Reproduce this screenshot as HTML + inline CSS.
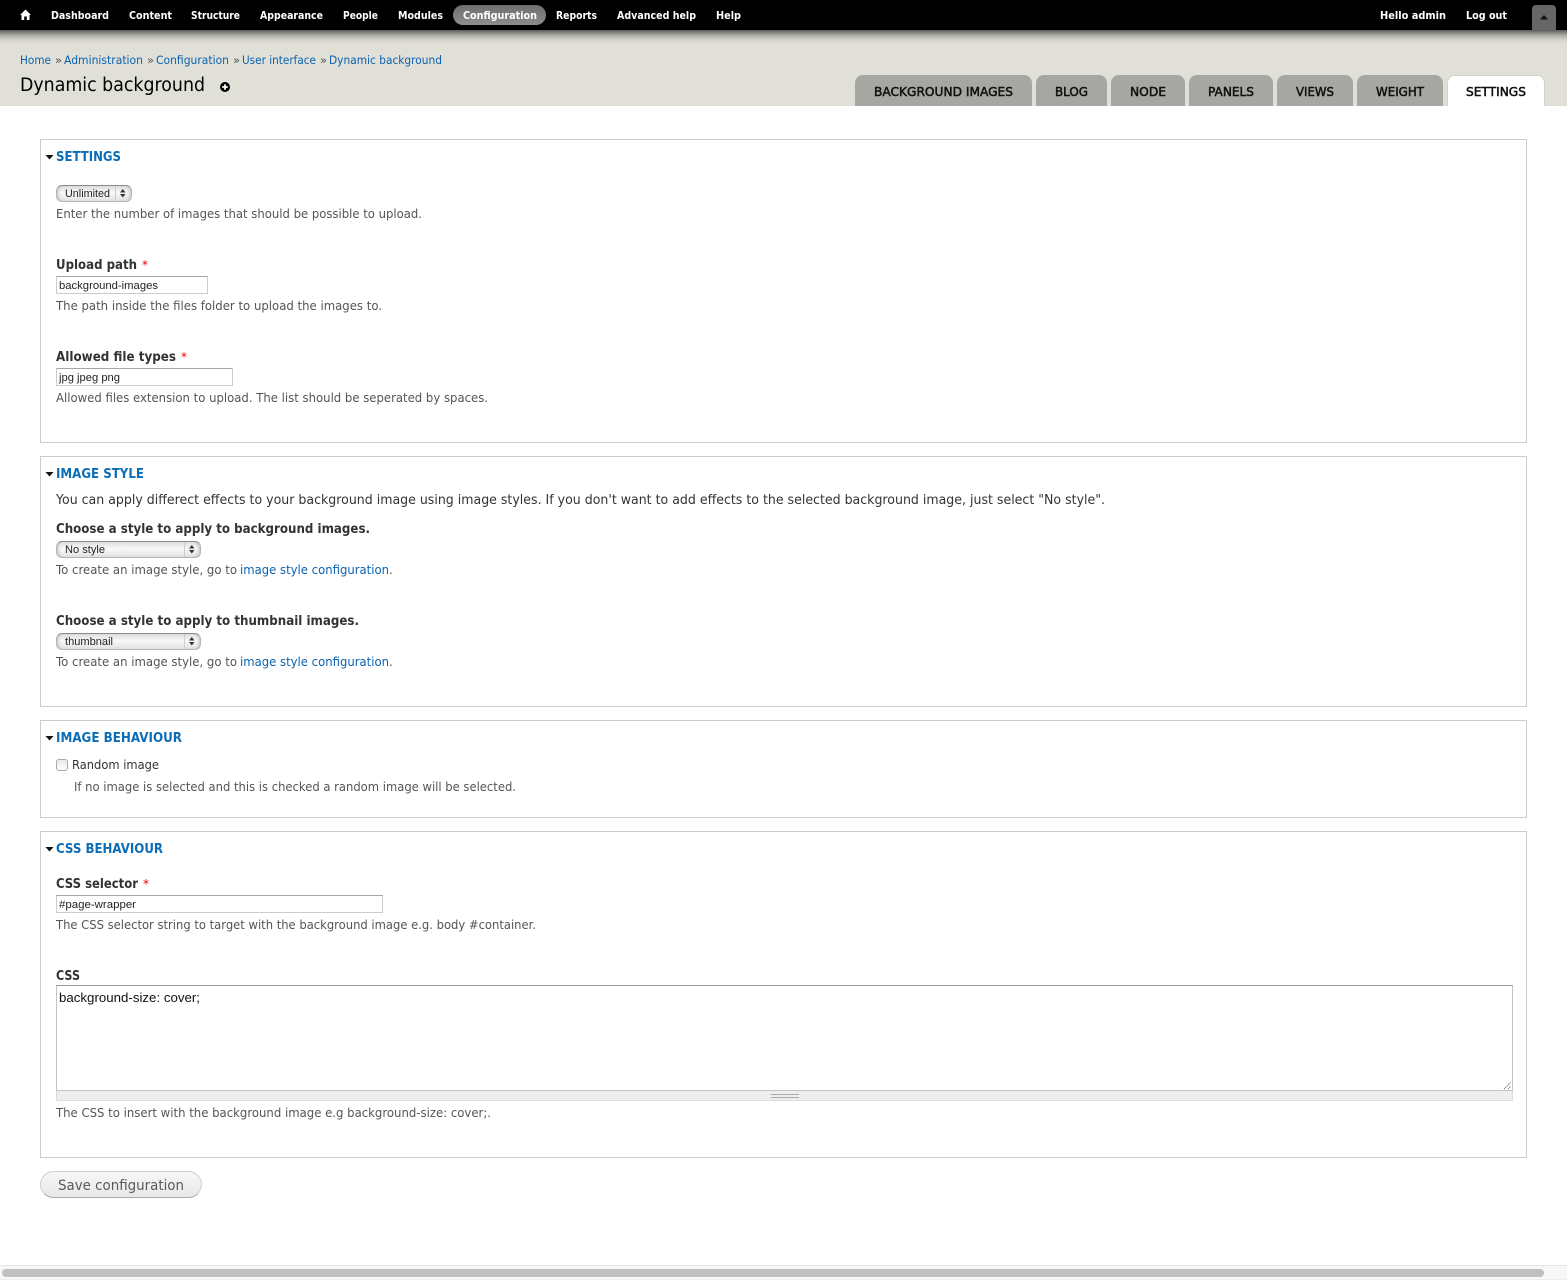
<!DOCTYPE html>
<html lang="en"><head><meta charset="utf-8"><title>Dynamic background</title>
<style>
html,body{margin:0;padding:0;background:#fff;width:1567px;height:1280px;overflow:hidden}
#w{position:relative;width:1567px;height:1280px;overflow:hidden}
#w div{position:absolute;box-sizing:border-box}
.fs{left:40px;width:1487px;border:1px solid #ccc;background:#fff}
.tab{top:75px;height:31px;background:#a6a7a2;border-radius:8px 8px 0 0}
.in{left:56px;height:18px;border:1px solid #ccc;border-top-color:#a5a5a5;background:#fff}
.sel{left:56px;height:17px;border:1px solid #b5b5b5;border-top-color:#8c8c8c;border-radius:6px;background:linear-gradient(#dedede,#f8f8f8 45%,#e2e2e2);box-shadow:inset 3px 0 3px -2px #bbb,inset -3px 0 3px -2px #bbb}
.sep{top:0;bottom:0;width:1px;background:#ccc}
svg{position:absolute;left:0;top:0}
text{font-family:"DejaVu Sans",sans-serif;font-size:12px}
.t{font-family:"DejaVu Sans",sans-serif;font-size:11px;font-weight:bold;fill:#fff}
.h{font-weight:bold;font-size:13px;fill:#0b6db5}
.l{font-weight:bold;font-size:13px;fill:#333}
.d{font-size:12px;fill:#555}
.a{fill:#0b62ae}
.s{font-family:"Liberation Sans",sans-serif;font-size:11px;fill:#222}
.r{font-weight:normal;fill:#e00}
.tb{font-size:12px;fill:#111;stroke:#111;stroke-width:.5px}
.bc{font-size:11.500px;fill:#0b62ae}
.bs{font-size:11.500px;fill:#555}
</style></head><body>
<div id="w">
<div style="left:0;top:30px;width:1567px;height:76px;background:linear-gradient(#5c5c58 0,#a9a9a3 5px,#d4d4cd 10px,#e0e0d8 15px,#e0e0d8 100%)"></div>
<div style="left:0;top:0;width:1567px;height:30px;background:#000"></div>
<div style="left:453px;top:5px;width:93px;height:20px;border-radius:10px;background:linear-gradient(#6e6e6e,#8d8d8d)"></div>
<div style="left:1532px;top:5px;width:24px;height:25px;border-radius:4px 4px 0 0;background:#666"></div>

<div class="tab" style="left:855px;width:177px"></div>
<div class="tab" style="left:1036px;width:71px"></div>
<div class="tab" style="left:1111px;width:74px"></div>
<div class="tab" style="left:1189px;width:84px"></div>
<div class="tab" style="left:1277px;width:76px"></div>
<div class="tab" style="left:1357px;width:86px"></div>
<div class="tab" style="left:1447px;top:75px;width:98px;height:31px;background:#fff;border:1px solid #d2d2cb;border-bottom:0"></div>
<div style="left:0;top:106px;width:1567px;height:1159px;background:#fff"></div>

<div class="fs" style="top:139px;height:304px"></div>
<div class="fs" style="top:456px;height:251px"></div>
<div class="fs" style="top:720px;height:98px"></div>
<div class="fs" style="top:831px;height:327px"></div>

<div class="sel" style="top:185px;width:76px"><div class="sep" style="left:58px"></div></div>
<div class="in" style="top:276px;width:152px"></div>
<div class="in" style="top:368px;width:177px"></div>
<div class="sel" style="top:541px;width:145px"><div class="sep" style="left:127px"></div></div>
<div class="sel" style="top:633px;width:145px"><div class="sep" style="left:127px"></div></div>
<div style="left:56px;top:759px;width:12px;height:12px;border:1px solid #aaa;border-radius:3px;background:linear-gradient(#e8e8e8,#fff)"></div>
<div class="in" style="top:895px;width:327px"></div>
<div style="left:56px;top:985px;width:1457px;height:106px;border:1px solid #c4c4c4;border-top-color:#999;background:#fff"></div>
<div style="left:56px;top:1091px;width:1457px;height:10px;background:#eee;border-bottom:1px solid #ddd;border-right:1px solid #ddd;border-left:1px solid #ddd"></div>
<div style="left:771px;top:1094px;width:28px;height:4px;border-top:1px solid #aaa;border-bottom:1px solid #aaa"></div>
<div style="left:40px;top:1171px;width:162px;height:27px;border:1px solid #d0d0d0;border-bottom-color:#aaa;border-radius:14px;background:linear-gradient(#f7f7f7,#e8e8e8)"></div>
<div style="left:0;top:1265px;width:1567px;height:15px;background:#f7f7f7;border-top:1px solid #e6e6e6;border-bottom:1px solid #eee"></div>
<div style="left:2px;top:1269px;width:1542px;height:8px;border-radius:4px;background:#c0c0c0"></div>

<svg width="1567" height="1280" viewBox="0 0 1567 1280">
<path d="M25.500 9.500 L31 15 H29.500 V20 H26.800 V16.500 H24.200 V20 H21.500 V15 H20 Z" fill="#fff"/>
<text class="t" x="51" y="19" textLength="58" lengthAdjust="spacingAndGlyphs">Dashboard</text>
<text class="t" x="129" y="19" textLength="43" lengthAdjust="spacingAndGlyphs">Content</text>
<text class="t" x="191" y="19" textLength="49" lengthAdjust="spacingAndGlyphs">Structure</text>
<text class="t" x="260" y="19" textLength="63" lengthAdjust="spacingAndGlyphs">Appearance</text>
<text class="t" x="343" y="19" textLength="35" lengthAdjust="spacingAndGlyphs">People</text>
<text class="t" x="398" y="19" textLength="45" lengthAdjust="spacingAndGlyphs">Modules</text>
<text class="t" x="463" y="19" textLength="74" lengthAdjust="spacingAndGlyphs">Configuration</text>
<text class="t" x="556" y="19" textLength="41" lengthAdjust="spacingAndGlyphs">Reports</text>
<text class="t" x="617" y="19" textLength="79" lengthAdjust="spacingAndGlyphs">Advanced help</text>
<text class="t" x="716" y="19" textLength="25" lengthAdjust="spacingAndGlyphs">Help</text>
<text class="t" x="1380" y="19" textLength="66" lengthAdjust="spacingAndGlyphs">Hello admin</text>
<text class="t" x="1466" y="19" textLength="41" lengthAdjust="spacingAndGlyphs">Log out</text>
<path d="M1540 19.500 L1544 15 L1548 19.500 Z" fill="#111"/>

<text class="bc" x="20" y="64" textLength="31" lengthAdjust="spacingAndGlyphs">Home</text><text class="bs" x="55" y="64">»</text>
<text class="bc" x="64" y="64" textLength="79" lengthAdjust="spacingAndGlyphs">Administration</text><text class="bs" x="147" y="64">»</text>
<text class="bc" x="156" y="64" textLength="73" lengthAdjust="spacingAndGlyphs">Configuration</text><text class="bs" x="233" y="64">»</text>
<text class="bc" x="242" y="64" textLength="74" lengthAdjust="spacingAndGlyphs">User interface</text><text class="bs" x="320" y="64">»</text>
<text class="bc" x="329" y="64" textLength="113" lengthAdjust="spacingAndGlyphs">Dynamic background</text>
<text style="font-size:18.500px" fill="#000" x="20" y="91" textLength="185" lengthAdjust="spacingAndGlyphs">Dynamic background</text>
<circle cx="225" cy="87" r="5" fill="#000"/><path d="M225 84.200V89.800M222.200 87H227.800" stroke="#fff" stroke-width="1.800"/>

<text class="tb" x="874" y="96" textLength="139" lengthAdjust="spacingAndGlyphs">BACKGROUND IMAGES</text>
<text class="tb" x="1055" y="96" textLength="33" lengthAdjust="spacingAndGlyphs">BLOG</text>
<text class="tb" x="1130" y="96" textLength="36" lengthAdjust="spacingAndGlyphs">NODE</text>
<text class="tb" x="1208" y="96" textLength="46" lengthAdjust="spacingAndGlyphs">PANELS</text>
<text class="tb" x="1296" y="96" textLength="38" lengthAdjust="spacingAndGlyphs">VIEWS</text>
<text class="tb" x="1376" y="96" textLength="48" lengthAdjust="spacingAndGlyphs">WEIGHT</text>
<text class="tb" x="1466" y="96" textLength="60" lengthAdjust="spacingAndGlyphs">SETTINGS</text>

<path d="M45.500 155H53.500L49.500 159.500Z M45.500 472H53.500L49.500 476.500Z M45.500 736H53.500L49.500 740.500Z M45.500 847H53.500L49.500 851.500Z" fill="#111"/>
<text class="h" x="56" y="161" textLength="65" lengthAdjust="spacingAndGlyphs">SETTINGS</text>
<text class="h" x="56" y="478" textLength="88" lengthAdjust="spacingAndGlyphs">IMAGE STYLE</text>
<text class="h" x="56" y="742" textLength="126" lengthAdjust="spacingAndGlyphs">IMAGE BEHAVIOUR</text>
<text class="h" x="56" y="853" textLength="107" lengthAdjust="spacingAndGlyphs">CSS BEHAVIOUR</text>

<text class="s" x="65" y="197" textLength="45" lengthAdjust="spacingAndGlyphs">Unlimited</text>
<path d="M120 192.500L122.800 189L125.500 192.500ZM120 194L122.800 197.500L125.500 194Z" fill="#333"/>
<text class="d" x="56" y="218" textLength="366" lengthAdjust="spacingAndGlyphs">Enter the number of images that should be possible to upload.</text>
<text class="l" x="56" y="269" textLength="81" lengthAdjust="spacingAndGlyphs">Upload path</text><text class="r" x="142" y="269">*</text>
<text class="s" x="59" y="289" textLength="99" lengthAdjust="spacingAndGlyphs">background-images</text>
<text class="d" x="56" y="310" textLength="326" lengthAdjust="spacingAndGlyphs">The path inside the files folder to upload the images to.</text>
<text class="l" x="56" y="361" textLength="120" lengthAdjust="spacingAndGlyphs">Allowed file types</text><text class="r" x="181" y="361">*</text>
<text class="s" x="59" y="381" textLength="61" lengthAdjust="spacingAndGlyphs">jpg jpeg png</text>
<text class="d" x="56" y="402" textLength="432" lengthAdjust="spacingAndGlyphs">Allowed files extension to upload. The list should be seperated by spaces.</text>

<text style="font-size:13px" fill="#333" x="56" y="504" textLength="1049" lengthAdjust="spacingAndGlyphs">You can apply differect effects to your background image using image styles. If you don't want to add effects to the selected background image, just select "No style".</text>
<text class="l" x="56" y="533" textLength="314" lengthAdjust="spacingAndGlyphs">Choose a style to apply to background images.</text>
<text class="s" x="65" y="553" textLength="40" lengthAdjust="spacingAndGlyphs">No style</text>
<path d="M189 548.500L191.800 545L194.500 548.500ZM189 550L191.800 553.500L194.500 550Z" fill="#333"/>
<text class="d" x="56" y="574" textLength="181" lengthAdjust="spacingAndGlyphs">To create an image style, go to</text>
<text class="d a" x="240" y="574" textLength="149" lengthAdjust="spacingAndGlyphs">image style configuration</text><text class="d" x="389" y="574">.</text>
<text class="l" x="56" y="625" textLength="303" lengthAdjust="spacingAndGlyphs">Choose a style to apply to thumbnail images.</text>
<text class="s" x="65" y="645" textLength="48" lengthAdjust="spacingAndGlyphs">thumbnail</text>
<path d="M189 640.500L191.800 637L194.500 640.500ZM189 642L191.800 645.500L194.500 642Z" fill="#333"/>
<text class="d" x="56" y="666" textLength="181" lengthAdjust="spacingAndGlyphs">To create an image style, go to</text>
<text class="d a" x="240" y="666" textLength="149" lengthAdjust="spacingAndGlyphs">image style configuration</text><text class="d" x="389" y="666">.</text>

<text fill="#333" x="72" y="769" textLength="87" lengthAdjust="spacingAndGlyphs">Random image</text>
<text class="d" x="74" y="791" textLength="442" lengthAdjust="spacingAndGlyphs">If no image is selected and this is checked a random image will be selected.</text>

<text class="l" x="56" y="888" textLength="82" lengthAdjust="spacingAndGlyphs">CSS selector</text><text class="r" x="143" y="888">*</text>
<text class="s" x="59" y="908" textLength="77" lengthAdjust="spacingAndGlyphs">#page-wrapper</text>
<text class="d" x="56" y="929" textLength="480" lengthAdjust="spacingAndGlyphs">The CSS selector string to target with the background image e.g. body #container.</text>
<text class="l" x="56" y="980" textLength="24" lengthAdjust="spacingAndGlyphs">CSS</text>
<text style="font-family:'Liberation Sans',sans-serif;font-size:13px" fill="#111" x="59" y="1002" textLength="141" lengthAdjust="spacingAndGlyphs">background-size: cover;</text>
<path d="M1504 1089L1511 1082M1508 1089L1511 1086" stroke="#555" stroke-width="1" stroke-dasharray="1 1"/>
<text class="d" x="56" y="1117" textLength="435" lengthAdjust="spacingAndGlyphs">The CSS to insert with the background image e.g background-size: cover;.</text>
<text style="font-size:14px" fill="#5a5a5a" x="58" y="1190" textLength="126" lengthAdjust="spacingAndGlyphs">Save configuration</text>
</svg>
</div>
</body></html>
